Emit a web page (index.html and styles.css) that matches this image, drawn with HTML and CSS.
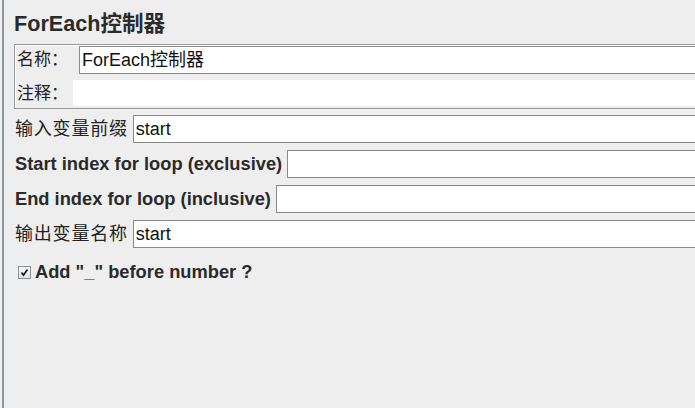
FILE: index.html
```html
<!DOCTYPE html>
<html lang="zh">
<head>
<meta charset="utf-8">
<title>ForEach控制器</title>
<link rel="stylesheet" href="styles.css">
</head>
<body>
<div class="page">
  <h1 class="title">ForEach控制器</h1>
  <div class="panel">
    <div class="panel-row">
      <span class="panel-label">名称：</span>
      <div class="field field-name">ForEach控制器</div>
    </div>
    <div class="panel-row">
      <span class="panel-label">注释：</span>
      <div class="comment"></div>
    </div>
  </div>
  <div class="row">
    <span class="label cjk">输入变量前缀</span>
    <div class="field">start</div>
  </div>
  <div class="row">
    <span class="label bold">Start index for loop (exclusive)</span>
    <div class="field"></div>
  </div>
  <div class="row">
    <span class="label bold">End index for loop (inclusive)</span>
    <div class="field"></div>
  </div>
  <div class="row">
    <span class="label cjk">输出变量名称</span>
    <div class="field">start</div>
  </div>
  <div class="check-row">
    <span class="checkbox">
      <svg width="9" height="9" viewBox="0 0 9 9"><path d="M1.5 4.5 L3.5 7 L7.5 1.5" fill="none" stroke="#1a1a1a" stroke-width="1.7"/></svg>
    </span>
    <span class="label bold">Add "_" before number ?</span>
  </div>
</div>
</body>
</html>
```

FILE: styles.css
```css
html, body {
  margin: 0;
  padding: 0;
}
body {
  background: #eeeeee;
  width: 695px;
  height: 408px;
  overflow: hidden;
  font-family: "Liberation Sans", "Noto Sans CJK SC", sans-serif;
  color: #222;
}
.page {
  margin-left: 2px;
  border-left: 2px solid #8e949d;
  padding-left: 10px;
  height: 408px;
  width: 693px;
  box-sizing: border-box;
  overflow: hidden;
}
.title {
  margin: 0;
  padding-top: 10px;
  font-size: 21.6px;
  line-height: 27px;
  height: 34px;
  font-weight: bold;
  color: #2a2a2a;
}
.panel {
  border: 1px solid #9a9a9a;
  border-right: none;
  box-shadow: inset 1px 1px 0 #ffffff;
  padding: 1px 0 0 2px;
  height: 62px;
  display: flex;
  flex-direction: column;
  gap: 6px;
}
.panel-row {
  display: flex;
  align-items: stretch;
}
.panel-label {
  width: 56px;
  font-size: 17px;
  line-height: 28px;
  flex: none;
}
.field {
  flex: 1;
  height: 28px;
  box-sizing: border-box;
  border: 1px solid #8a8a8a;
  border-right: none;
  background: #ffffff;
  font-size: 18px;
  line-height: 26px;
  padding-left: 2px;
  color: #111;
}
.field-name {
  margin-left: 6px;
}
.comment {
  flex: 1;
  height: 26px;
  background: #ffffff;
}
.row {
  display: flex;
  align-items: center;
  gap: 5px;
  margin-top: 7px;
  padding-left: 1px;
}
.panel + .row {
  margin-top: 6px;
}
.label {
  font-size: 18px;
  line-height: 28px;
  white-space: nowrap;
}
.label.cjk {
  letter-spacing: 0.8px;
}
.label.bold {
  font-size: 18.3px;
  font-weight: bold;
  color: #2a2a2a;
}
.check-row {
  display: flex;
  align-items: center;
  gap: 4px;
  margin-top: 10px;
  padding-left: 4px;
}
.checkbox {
  width: 13px;
  height: 13px;
  box-sizing: border-box;
  border: 1px solid #8a9098;
  background: linear-gradient(#f4f6f8, #dfe4ea);
  display: flex;
  align-items: center;
  justify-content: center;
}
```
